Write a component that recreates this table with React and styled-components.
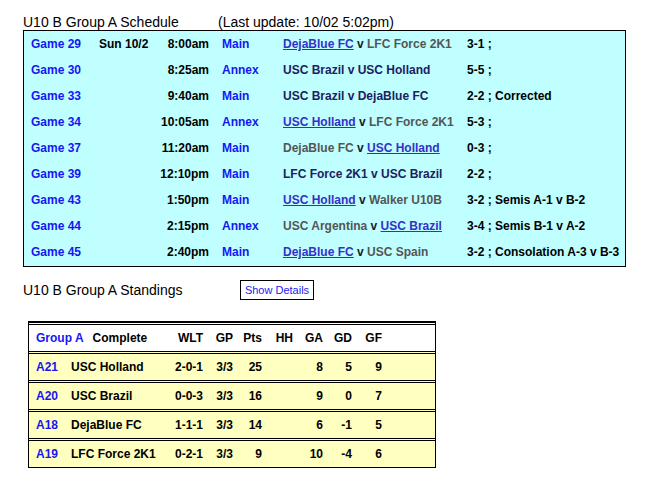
import React from 'react'
import styled, { createGlobalStyle } from 'styled-components'

const GlobalStyle = createGlobalStyle`
    body {
        margin : 0;
        background : #fff;
        font-family : "Liberation Sans", Arial, sans-serif;
        color : #000;
    }
`;

const Page = styled.div`
    padding : 14px 0 0 23px;
`;

const SectionHead = styled.div`
    display : flex;
    align-items : center;
    font-size : 14px;
    line-height : 16px;
`;

const HeadTitle = styled.span`
    width : ${({ $w }) => $w}px;
    flex-shrink : 0;
`;

const ScheduleBox = styled.div`
    width : 601px;
    border : 1px solid #000;
    background : #bfffff;
    padding-bottom : 1px;
`;

const GameRow = styled.div`
    display : grid;
    grid-template-columns : 75px 51px 59px 74px 184px 1fr;
    height : 26px;
    align-items : center;
    font-size : 12px;
    font-weight : bold;
    white-space : nowrap;
`;

const Blue = styled.span`
    color : #1616f5;
`;

const GameNo = styled(Blue)`
    padding-left : 7px;
`;

const Venue = styled(Blue)`
    padding-left : 13px;
`;

const Time = styled.span`
    text-align : right;
`;

const Match = styled.span`
    color : ${({ $tie }) => ($tie ? '#20205f' : '#1a1a2a')};
`;

const Winner = styled.a`
    color : #3530c8;
    text-decoration : underline;
`;

const Loser = styled.span`
    color : #555;
`;

const StandHead = styled(SectionHead)`
    margin-top : 13px;
    height : 20px;
`;

const DetailsButton = styled.button`
    font-family : "Liberation Sans", Arial, sans-serif;
    font-size : 11px;
    color : #2020f0;
    background : #fff;
    border : 1px solid #000;
    height : 20px;
    width : 74px;
    padding : 0;
    cursor : pointer;
`;

const Table = styled.div`
    margin : 21px 0 0 5px;
    width : 406px;
    border : 1px solid #000;
    border-top-width : 1px;
`;

const TRow = styled.div`
    display : grid;
    grid-template-columns : 35px 96px 36px 30px 29px 31px 30px 29px 30px 1fr;
    height : 26px;
    padding-left : 7px;
    align-items : center;
    border-top : 3px double #000;
    background : ${({ $head }) => ($head ? '#fff' : '#ffffc0')};
    font-size : 12px;
    font-weight : bold;
    white-space : nowrap;
`;

const Num = styled.span`
    text-align : right;
`;

const HeadLabel = styled.span`
    grid-column : span 2;
    display : flex;
    gap : 9px;
`;

const games = [
    { no: 29, day: 'Sun 10/2', time: '8:00am', venue: 'Main', a: 'DejaBlue FC', b: 'LFC Force 2K1', win: 'a', score: '3-1 ;' },
    { no: 30, time: '8:25am', venue: 'Annex', a: 'USC Brazil', b: 'USC Holland', score: '5-5 ;' },
    { no: 33, time: '9:40am', venue: 'Main', a: 'USC Brazil', b: 'DejaBlue FC', score: '2-2 ; Corrected' },
    { no: 34, time: '10:05am', venue: 'Annex', a: 'USC Holland', b: 'LFC Force 2K1', win: 'a', score: '5-3 ;' },
    { no: 37, time: '11:20am', venue: 'Main', a: 'DejaBlue FC', b: 'USC Holland', win: 'b', score: '0-3 ;' },
    { no: 39, time: '12:10pm', venue: 'Main', a: 'LFC Force 2K1', b: 'USC Brazil', score: '2-2 ;' },
    { no: 43, time: '1:50pm', venue: 'Main', a: 'USC Holland', b: 'Walker U10B', win: 'a', score: '3-2 ; Semis A-1 v B-2' },
    { no: 44, time: '2:15pm', venue: 'Annex', a: 'USC Argentina', b: 'USC Brazil', win: 'b', score: '3-4 ; Semis B-1 v A-2' },
    { no: 45, time: '2:40pm', venue: 'Main', a: 'DejaBlue FC', b: 'USC Spain', win: 'a', score: '3-2 ; Consolation A-3 v B-3' },
];

const standings = [
    { id: 'A21', team: 'USC Holland', wlt: '2-0-1', gp: '3/3', pts: 25, hh: '', ga: 8, gd: 5, gf: 9 },
    { id: 'A20', team: 'USC Brazil', wlt: '0-0-3', gp: '3/3', pts: 16, hh: '', ga: 9, gd: 0, gf: 7 },
    { id: 'A18', team: 'DejaBlue FC', wlt: '1-1-1', gp: '3/3', pts: 14, hh: '', ga: 6, gd: -1, gf: 5 },
    { id: 'A19', team: 'LFC Force 2K1', wlt: '0-2-1', gp: '3/3', pts: 9, hh: '', ga: 10, gd: -4, gf: 6 },
];

const Team = ({ name, state }) => {
    if (state === 'win') return <Winner href="#">{name}</Winner>
    if (state === 'lose') return <Loser>{name}</Loser>
    return <span>{name}</span>
}

const App = () => {
    return (
        <Page>
            <GlobalStyle />
            <SectionHead>
                <HeadTitle $w={195}>U10 B Group A Schedule</HeadTitle>
                <span>(Last update: 10/02 5:02pm)</span>
            </SectionHead>
            <ScheduleBox>
                {games.map((g) => {
                    const tie = !g.win
                    const sa = tie ? 'tie' : g.win === 'a' ? 'win' : 'lose'
                    const sb = tie ? 'tie' : g.win === 'b' ? 'win' : 'lose'
                    return (
                        <GameRow key={g.no}>
                            <GameNo>Game {g.no}</GameNo>
                            <span>{g.day}</span>
                            <Time>{g.time}</Time>
                            <Venue>{g.venue}</Venue>
                            <Match $tie={tie}>
                                <Team name={g.a} state={sa} /> v <Team name={g.b} state={sb} />
                            </Match>
                            <span>{g.score}</span>
                        </GameRow>
                    )
                })}
            </ScheduleBox>
            <StandHead>
                <HeadTitle $w={217}>U10 B Group A Standings</HeadTitle>
                <DetailsButton>Show Details</DetailsButton>
            </StandHead>
            <Table>
                <TRow $head>
                    <HeadLabel><Blue>Group A</Blue><span>Complete</span></HeadLabel>
                    <Num>WLT</Num>
                    <Num>GP</Num>
                    <Num>Pts</Num>
                    <Num>HH</Num>
                    <Num>GA</Num>
                    <Num>GD</Num>
                    <Num>GF</Num>
                </TRow>
                {standings.map((s) => (
                    <TRow key={s.id}>
                        <Blue>{s.id}</Blue>
                        <span>{s.team}</span>
                        <Num>{s.wlt}</Num>
                        <Num>{s.gp}</Num>
                        <Num>{s.pts}</Num>
                        <Num>{s.hh}</Num>
                        <Num>{s.ga}</Num>
                        <Num>{s.gd}</Num>
                        <Num>{s.gf}</Num>
                    </TRow>
                ))}
            </Table>
        </Page>
    )
}

export default App
